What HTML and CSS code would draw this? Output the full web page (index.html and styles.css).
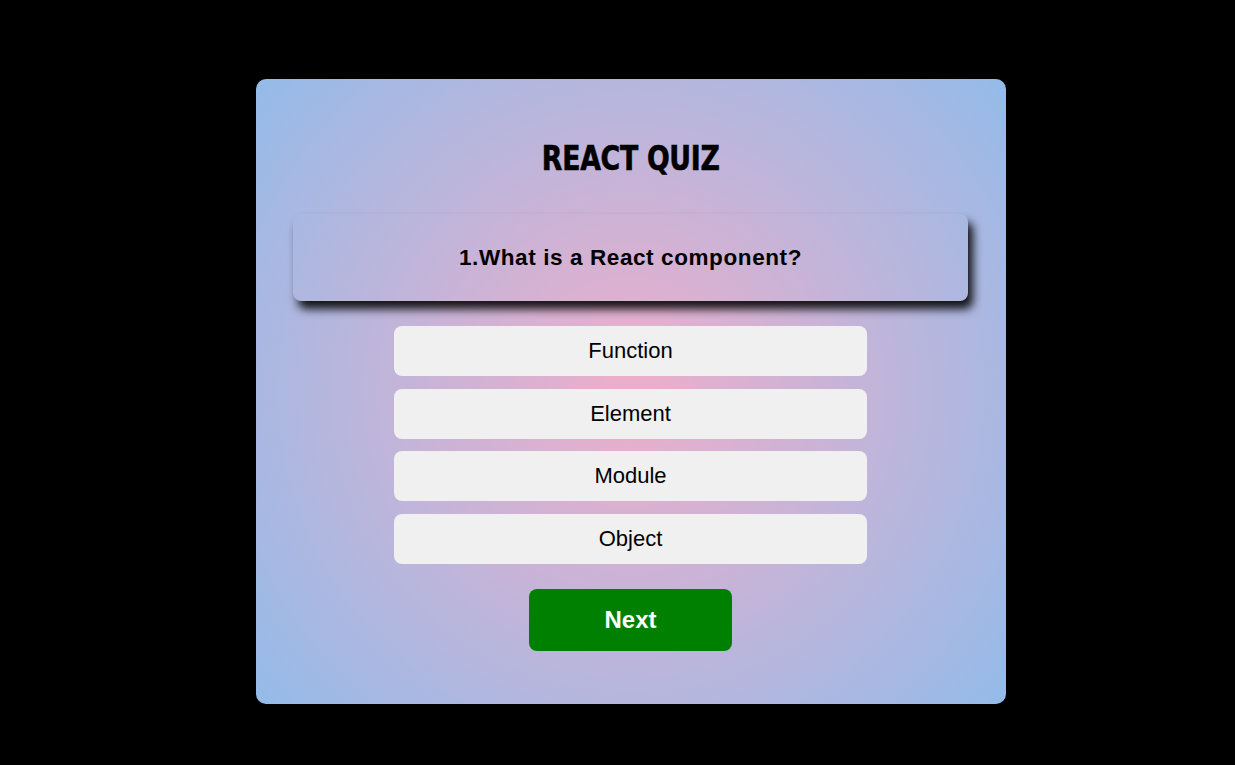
FILE: index.html
```html
<!DOCTYPE html>
<html>
<head>
<meta charset="utf-8">
<link rel="stylesheet" href="styles.css">
</head>
<body>
<div class="page">
  <div class="card">
    <h1 class="title">REACT QUIZ</h1>
    <div class="question">1.What is a React component?</div>
    <ul class="options">
      <li class="option">Function</li>
      <li class="option">Element</li>
      <li class="option">Module</li>
      <li class="option">Object</li>
    </ul>
    <button class="next">Next</button>
  </div>
</div>
</body>
</html>
```
FILE: styles.css
```css
html, body {
  margin: 0;
  padding: 0;
  background: #000;
  height: 100%;
}
.page {
  display: flex;
  justify-content: center;
  padding-top: 79px;
  padding-left: 26px;
}
.card {
  width: 750px;
  height: 625px;
  box-sizing: border-box;
  border-radius: 10px;
  background: radial-gradient(circle, rgba(238,174,202,1) 0%, rgba(148,187,233,1) 100%);
  display: flex;
  flex-direction: column;
  align-items: center;
  padding-top: 60px;
}
.title {
  margin: 0 0 35px;
  height: 40px;
  font-family: "DejaVu Sans Condensed", "DejaVu Sans", sans-serif;
  font-weight: 900;
  font-size: 33px;
  line-height: 40px;
  letter-spacing: -0.3px;
  color: #000;
  -webkit-text-stroke: 0.6px #000;
  transform: scaleX(0.9);
}
.question {
  width: 675px;
  height: 87px;
  box-sizing: border-box;
  border-radius: 8px;
  background: transparent;
  box-shadow: 5px 8px 10px rgba(0,0,0,0.9);
  display: flex;
  align-items: center;
  justify-content: center;
  font-family: "Liberation Sans", Arial, sans-serif;
  font-weight: 700;
  font-size: 22.5px;
  letter-spacing: 0.6px;
  color: #000;
}
.options {
  list-style: none;
  margin: 25px 0 0;
  padding: 0;
  display: flex;
  flex-direction: column;
  gap: 12.67px;
}
.option {
  width: 473px;
  height: 50px;
  background: #f0f0f0;
  border-radius: 8px;
  display: flex;
  align-items: center;
  justify-content: center;
  font-family: "Liberation Sans", Arial, sans-serif;
  font-size: 22px;
  color: #000;
}
.next {
  margin-top: 25px;
  width: 203px;
  height: 62px;
  border: none;
  border-radius: 8px;
  background: #008000;
  color: #fff;
  font-family: "Liberation Sans", Arial, sans-serif;
  font-weight: 700;
  font-size: 24px;
}
```
